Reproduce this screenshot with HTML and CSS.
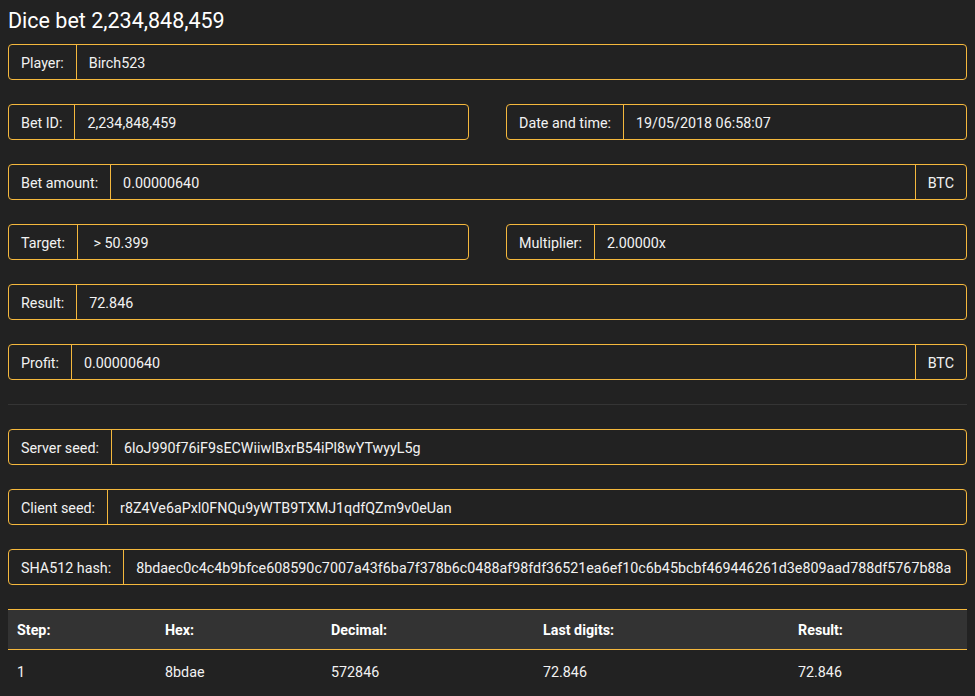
FILE: index.html
```html
<!DOCTYPE html>
<html lang="en">
<head>
<meta charset="utf-8">
<title>Dice bet 2,234,848,459</title>
<link rel="stylesheet" href="styles.css">
</head>
<body>
<h1 class="title">Dice bet 2,234,848,459</h1>

<div class="field"><span class="label">Player:</span><span class="value">Birch523</span></div>

<div class="pair">
  <div class="field"><span class="label">Bet ID:</span><span class="value">2,234,848,459</span></div>
  <div class="field"><span class="label">Date and time:</span><span class="value">19/05/2018 06:58:07</span></div>
</div>

<div class="field"><span class="label">Bet amount:</span><span class="value">0.00000640</span><span class="addon">BTC</span></div>

<div class="pair">
  <div class="field"><span class="label">Target:</span><span class="value">&nbsp;&gt; 50.399</span></div>
  <div class="field"><span class="label">Multiplier:</span><span class="value">2.00000x</span></div>
</div>

<div class="field"><span class="label">Result:</span><span class="value">72.846</span></div>

<div class="field"><span class="label">Profit:</span><span class="value">0.00000640</span><span class="addon">BTC</span></div>

<hr class="sep">

<div class="field"><span class="label">Server seed:</span><span class="value">6loJ990f76iF9sECWiiwIBxrB54iPl8wYTwyyL5g</span></div>

<div class="field"><span class="label">Client seed:</span><span class="value">r8Z4Ve6aPxl0FNQu9yWTB9TXMJ1qdfQZm9v0eUan</span></div>

<div class="field"><span class="label">SHA512 hash:</span><span class="value">8bdaec0c4c4b9bfce608590c7007a43f6ba7f378b6c0488af98fdf36521ea6ef10c6b45bcbf469446261d3e809aad788df5767b88a</span></div>

<table class="steps">
  <thead>
    <tr>
      <th class="c-step">Step:</th>
      <th class="c-hex">Hex:</th>
      <th class="c-dec">Decimal:</th>
      <th class="c-last">Last digits:</th>
      <th class="c-res">Result:</th>
    </tr>
  </thead>
  <tbody>
    <tr>
      <td>1</td>
      <td>8bdae</td>
      <td>572846</td>
      <td>72.846</td>
      <td>72.846</td>
    </tr>
  </tbody>
</table>
</body>
</html>
```

FILE: styles.css
```css
html, body {
  background: #222222;
}
body {
  margin: 8px;
  color: #f2f2f2;
  font-family: Roboto, "Liberation Sans", Arial, sans-serif;
  font-size: 14.3px;
  line-height: 20px;
}
.title {
  margin: 0 0 10px;
  font-size: 21.5px;
  line-height: 26px;
  font-weight: 400;
  color: #ffffff;
}
.field {
  display: flex;
  border: 1px solid #f5b83d;
  border-radius: 4px;
  margin-bottom: 24px;
  min-width: 0;
}
.label {
  padding: 8px 12px 6px;
  border-right: 1px solid #f5b83d;
  white-space: nowrap;
}
.value {
  flex: 1;
  min-width: 0;
  padding: 8px 12px 6px;
  white-space: nowrap;
  overflow: hidden;
}
.addon {
  padding: 8px 12px 6px;
  border-left: 1px solid #f5b83d;
  white-space: nowrap;
}
.pair {
  display: grid;
  grid-template-columns: 1fr 1fr;
  column-gap: 37px;
}
.sep {
  border: 0;
  border-top: 1px solid #353535;
  margin: 24px 0;
  height: 0;
}
.steps {
  width: 100%;
  border-collapse: collapse;
  table-layout: fixed;
}
.steps th,
.steps td {
  box-sizing: border-box;
  text-align: left;
  line-height: 20px;
}
.steps td {
  padding: 12px 9px 8px;
}
.steps thead tr {
  background: #333333;
}
.steps th {
  font-weight: 700;
  color: #ffffff;
  border-top: 1px solid #f5b83d;
  border-bottom: 1px solid #f5b83d;
  padding: 10px 9px 9px;
}
.c-step { width: 148px; }
.c-hex { width: 166px; }
.c-dec { width: 212px; }
.c-last { width: 255px; }
.c-res { width: auto; }
```
